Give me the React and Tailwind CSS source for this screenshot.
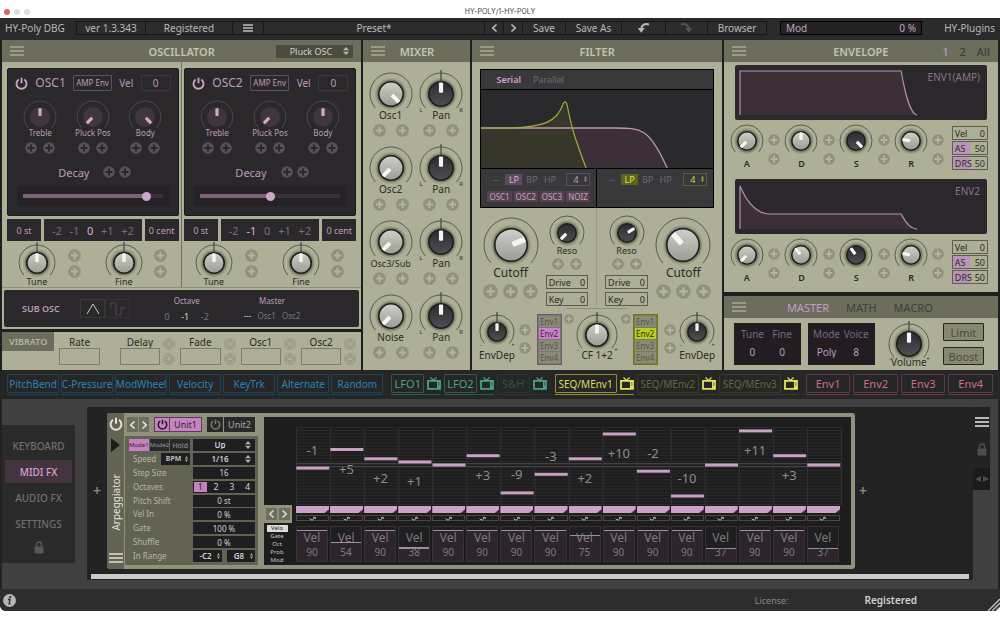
import React from "react";

const KNOB_THEMES = {
  light: { fill: "url(#knob-light)", pointer: "#f4f4f0", ring: "#5a5b4d", edge: "#1d1d1b" },
  dark: { fill: "url(#knob-dark)", pointer: "#f4f4f4", ring: "#5a5b4d", edge: "#1d1d1b" },
  pink: { fill: "#3f373d", pointer: "#d0aacb", ring: "#4b474a", edge: "#3f373d" },
};

function Knob({ label, ring, radius, angle = 0, theme = "light", tick, ends, name, labelClass = "h-2 text-[10px]" }) {
  const t = KNOB_THEMES[theme];
  const c = ring + 1;
  const drop = Math.round(ring * 0.75);
  const k = ring * 0.74;
  const pw = Math.max(3, radius * 0.32);
  return (
    <label className="relative flex flex-col items-center">
      <svg width={2 * c} height={c + drop} viewBox={`${-c} ${-c} ${2 * c} ${c + drop}`} className="block overflow-visible">
        <path
          d={`M${-k} ${ring * 0.67} A${ring} ${ring} 0 1 1 ${k} ${ring * 0.67}`}
          fill="none"
          stroke={t.ring}
          strokeWidth="1"
        />
        {theme !== "pink" && (
          <>
            <circle r={radius + 3} fill="#000" opacity="0.08" />
            <circle r={radius + 1.5} fill="#000" opacity="0.22" />
          </>
        )}
        {tick && <line x1="0" x2="0" y1={-ring - 3} y2={-radius} stroke="#33342b" />}
        <circle r={radius - 0.8} fill={t.fill} stroke={t.edge} strokeWidth="1.6" />
        <rect
          x={-pw / 2}
          y={-radius * 0.88}
          width={pw}
          height={radius * 0.78}
          rx="1"
          fill={t.pointer}
          transform={`rotate(${angle})`}
        />
        {ends && (
          <g fill="#33342b" fontSize="6" textAnchor="middle">
            <text x={-ring + 1} y={drop + 2}>{ends[0]}</text>
            <text x={ring - 1} y={drop + 2}>{ends[1]}</text>
          </g>
        )}
      </svg>
      <span className={"flex items-center whitespace-nowrap " + labelClass}>{label}</span>
      <input
        type="range"
        min="-135"
        max="135"
        defaultValue={angle}
        aria-label={name || label}
        className="absolute inset-0 h-full w-full cursor-pointer opacity-0"
      />
    </label>
  );
}

function Plus({ size = 13, tone = "light" }) {
  const dark = tone === "dark";
  return (
    <button type="button" aria-label="Add modulation" className="block shrink-0">
      <svg width={size} height={size} viewBox="0 0 14 14" className="block">
        {tone === "outline" ? (
          <>
            <circle cx="7" cy="7" r="6.2" fill="none" stroke="#8b8d75" strokeWidth="1" />
            <path d="M5.6 3h2.8v2.6H11v2.8H8.4V11H5.6V8.4H3V5.6h2.6z" fill="none" stroke="#8b8d75" strokeWidth="1" />
          </>
        ) : (
          <>
            <circle cx="7" cy="7" r="6.8" fill={dark ? "#5b4e57" : "#8f917a"} />
            <path d="M7 3v8M3 7h8" stroke={dark ? "#29272a" : "#b2b49b"} strokeWidth="2.2" />
          </>
        )}
      </svg>
    </button>
  );
}

function Burger({ className = "text-[#a9ab93]" }) {
  return (
    <button type="button" aria-label="Menu" className={className}>
      <svg width="14" height="10" viewBox="0 0 14 10" className="block">
        <path d="M0 1h14M0 5h14M0 9h14" stroke="currentColor" strokeWidth="1.6" />
      </svg>
    </button>
  );
}

function Power({ size = 14, strokeWidth = 2 }) {
  return (
    <svg width={size} height={size} viewBox="0 0 14 14" className="block">
      <path d="M4 2.8A5.4 5.4 0 1 0 10 2.8M7 .8v6" fill="none" stroke="currentColor" strokeWidth={strokeWidth} />
    </svg>
  );
}

function Lock() {
  return (
    <svg width="10" height="13" viewBox="0 0 10 13" className="block">
      <rect x="0.5" y="5.5" width="9" height="7" rx="1" fill="currentColor" />
      <path d="M2.5 6V3.5a2.5 2.5 0 0 1 5 0V6" fill="none" stroke="currentColor" strokeWidth="1.5" />
    </svg>
  );
}

function Chevron({ left }) {
  return (
    <svg width="7" height="10" viewBox="0 0 7 10" className="block">
      <path d={left ? "M5.5 1.5 1.8 5l3.7 3.5" : "M1.5 1.5 5.2 5 1.5 8.5"} fill="none" stroke="currentColor" strokeWidth="1.7" />
    </svg>
  );
}

function Picker({ value, options, name, className, small }) {
  return (
    <div className={"relative flex items-center " + className}>
      <select
        aria-label={name}
        defaultValue={value}
        className={"h-full w-full appearance-none bg-transparent text-center [text-align-last:center] outline-none " + (small ? "pr-1" : "pr-2")}
      >
        {(options || [value]).map((o) => (
          <option key={o}>{o}</option>
        ))}
      </select>
      <svg
        width={small ? 3 : 6}
        height={small ? 6 : 8}
        viewBox="0 0 6 8"
        preserveAspectRatio="none"
        className={"pointer-events-none absolute " + (small ? "right-[2px]" : "right-1")}
      >
        <path d="M0 3.2 3 0l3 3.2zM0 4.8 3 8l3-3.2z" fill="currentColor" opacity="0.8" />
      </svg>
    </div>
  );
}

function Field({ value, name, className = "" }) {
  const align = className.includes("text-right") ? "" : "text-center ";
  return (
    <input
      type="text"
      aria-label={name}
      defaultValue={value}
      className={"block w-full min-w-0 outline-none " + align + className}
    />
  );
}

function Header({ title, children }) {
  return (
    <header className="grid h-[22px] grid-cols-[1fr_auto_1fr] items-center bg-[#6c6d5d] px-2 text-[#c3c4b2]">
      <Burger />
      <h2 className="text-[11px] font-semibold">{title}</h2>
      <div className="flex justify-end">{children}</div>
    </header>
  );
}

const barButton = "flex h-[14px] items-center justify-center border-l border-y border-[#181818] bg-[#2c2c2c] whitespace-nowrap";

function Toolbar() {
  return (
    <div className="grid h-[22px] grid-cols-[76fr_69fr_87fr_31fr_221fr_19fr_19fr_43fr_56fr_44fr_42fr_60fr_13fr_142fr_18fr_60fr] items-center bg-[#2a2a2a] pb-[2px] text-[10px] text-[#b9b9b9]">
      <span className="pl-[5px] text-[10px] whitespace-nowrap">HY-Poly DBG</span>
      <span className={barButton}>ver 1.3.343</span>
      <button type="button" className={barButton}>Registered</button>
      <button type="button" aria-label="Main menu" className={barButton}>
        <svg width="10" height="8" viewBox="0 0 10 8"><path d="M0 1h10M0 4h10M0 7h10" stroke="currentColor" strokeWidth="1.3" /></svg>
      </button>
      <button type="button" className={barButton}>Preset*</button>
      <button type="button" aria-label="Previous preset" className={barButton}><Chevron left /></button>
      <button type="button" aria-label="Next preset" className={barButton}><Chevron /></button>
      <button type="button" className={barButton}>Save</button>
      <button type="button" className={barButton}>Save As</button>
      <button type="button" aria-label="Undo" className={barButton}>
        <svg width="13" height="10" viewBox="0 0 13 10">
          <path d="M12 1.4C7.5.4 4.600 2 4.300 5.500" fill="none" stroke="currentColor" strokeWidth="2" />
          <path d="M.8 5h7L4.200 9.800z" fill="currentColor" />
        </svg>
      </button>
      <button type="button" aria-label="Redo" className={barButton + " text-[#555]"}>
        <svg width="13" height="10" viewBox="0 0 13 10">
          <path d="M1 1.400C5.500.4 8.400 2 8.700 5.500" fill="none" stroke="currentColor" strokeWidth="2" />
          <path d="M5.200 5h7L8.800 9.800z" fill="currentColor" />
        </svg>
      </button>
      <button type="button" className={barButton + " border-r"}>Browser</button>
      <span />
      <label className="flex h-[14px] items-center justify-between border border-black bg-[#242124] px-[5px] text-[#c0a5bc]">
        Mod
        <Field value="0 %" name="Mod amount" className="text-right" />
      </label>
      <span />
      <span className="pr-[5px] text-right text-[10px] whitespace-nowrap">HY-Plugins</span>
    </div>
  );
}

function OscColumn({ name, bodyAngle, decay, octave }) {
  const knobs = [["Treble", 0], ["Pluck Pos", -135], ["Body", bodyAngle]];
  return (
    <div className="px-[2px] pt-[6px] pb-[2px]">
      <div className="rounded-[2px] border border-[#1b1b1b] bg-[#2a282a] pt-[6px] pb-[9px] text-[#bd9cba]">
        <div className="flex h-4 items-center justify-between px-[7px]">
          <button type="button" aria-label={name + " power"} className="text-[#c9a3c6]"><Power size={13} /></button>
          <h3 className="text-[12px]">{name}</h3>
          <button type="button" className="h-4 rounded-[1px] border border-[#5c5059] px-[2px] text-[8px] whitespace-nowrap">AMP Env</button>
          <span className="text-[10px]">Vel</span>
          <Field value="0" name={name + " velocity"} className="h-4 max-w-[30px] border border-[#3a363a] text-[10px]" />
        </div>
        <div className="mt-[9px] grid grid-cols-3 px-[6px]">
          {knobs.map(([label, angle]) => (
            <div key={label} className="flex flex-col items-center">
              <Knob label={label} name={name + " " + label} ring={16} radius={10} angle={angle} theme="pink" labelClass="h-[8px] text-[8px]" />
              <div className="mt-[5px] flex gap-[6px]">
                <Plus size={12} tone="dark" />
                <Plus size={12} tone="dark" />
              </div>
            </div>
          ))}
        </div>
        <div className="mt-3 flex h-3 items-center justify-center pl-1 text-[11px]">
          <span className="mr-[14px]">Decay</span>
          <Plus size={12} tone="dark" />
          <span className="w-1" />
          <Plus size={12} tone="dark" />
        </div>
        <div className="mx-[9px] mt-2 flex h-5 items-center bg-[#242224] px-[6px]">
          <input
            type="range"
            aria-label={name + " decay"}
            defaultValue={decay}
            style={{ background: `linear-gradient(to right, #7d6179 ${decay}%, #3a2f37 ${decay}%)` }}
            className="h-1 w-full appearance-none [&::-webkit-slider-thumb]:h-[9px] [&::-webkit-slider-thumb]:w-[9px] [&::-webkit-slider-thumb]:appearance-none [&::-webkit-slider-thumb]:rounded-full [&::-webkit-slider-thumb]:bg-[#cda5c9]"
          />
        </div>
      </div>
      <div className="mt-[3px] grid grid-cols-[34fr_98fr_34fr] gap-[3px] text-[9px] text-[#bd9cba]">
        <Field value="0 st" name={name + " semitones"} className="h-[22px] bg-[#2a282a]" />
        <div className="flex h-[22px] items-center justify-between bg-[#2a282a] px-2 text-[11px] text-[#77707a]">
          {["-2", "-1", "0", "+1", "+2"].map((o) => (
            <button type="button" key={o} className={o === octave ? "text-[#e0aedb]" : ""}>{o}</button>
          ))}
        </div>
        <Field value="0 cent" name={name + " cents"} className="h-[22px] bg-[#2a282a]" />
      </div>
      <div className="mt-[3px] grid grid-cols-[60fr_28fr_58fr_26fr]">
        {["Tune", "Fine"].map((label) => (
          <React.Fragment key={label}>
            <Knob label={label} name={name + " " + label} ring={18} radius={11} tick labelClass="h-2 text-[9px]" />
            <div className="flex flex-col items-start justify-center gap-[3px] pb-[2px] pl-px">
              <Plus />
              <Plus />
            </div>
          </React.Fragment>
        ))}
      </div>
    </div>
  );
}

function SubOsc() {
  return (
    <div className="mx-[2px] mt-[2px] grid h-[37px] grid-cols-[76fr_50fr_26fr_60fr_20fr_70fr_52fr] items-center rounded-[2px] bg-[#2a282a] text-[#bd9cba]">
      <h3 className="pl-[18px] text-[9px] font-semibold whitespace-nowrap">SUB OSC</h3>
      <div className="grid grid-cols-2">
        <button type="button" aria-label="Triangle" className="flex h-[19px] items-center justify-center border border-[#3a383a] text-[#c9c9c9]">
          <svg width="14" height="12" viewBox="0 0 14 12"><path d="M1 11 7 1l6 10" fill="none" stroke="currentColor" /></svg>
        </button>
        <button type="button" aria-label="Square" className="flex h-[19px] items-center justify-center border border-[#343234] text-[#4c494c]">
          <svg width="16" height="14" viewBox="0 0 16 14"><path d="M1 6V1h5v12h5V6h4" fill="none" stroke="currentColor" /></svg>
        </button>
      </div>
      <span />
      <div className="text-center text-[8px]">
        <div className="h-[15px]">Octave</div>
        <div className="flex justify-between px-2 text-[9px] text-[#77757a]">
          <button type="button">0</button>
          <button type="button" className="text-[#d8d8d8]">-1</button>
          <button type="button">-2</button>
        </div>
      </div>
      <span />
      <div className="text-center text-[8px]">
        <div className="h-[15px]">Master</div>
        <div className="flex justify-center gap-[6px] text-[#77757a]">
          <button type="button" className="text-[#d8d8d8]">---</button>
          <button type="button">Osc1</button>
          <button type="button">Osc2</button>
        </div>
      </div>
    </div>
  );
}

function Vibrato() {
  return (
    <section className="mt-[3px] flex h-[38px] bg-[#adaf96] text-[#2b2c24]">
      <h2 className="flex h-[19px] flex-[53] items-center justify-center bg-[#6c6d5d] text-[9px] font-semibold text-[#b3b5a0]">VIBRATO</h2>
      <div className="grid flex-[306] grid-cols-5 pt-[3px] pl-[5px]">
        {["Rate", "Delay", "Fade", "Osc1", "Osc2"].map((n, i) => (
          <div key={n} className="flex gap-[3px]">
            <label className="flex flex-1 flex-col items-center text-[10px]">
              <span className="flex h-[13px] items-center">{n}</span>
              <input type="text" aria-label={"Vibrato " + n} className="h-[17px] w-full min-w-0 border border-[#7c7e69]" />
            </label>
            <div className="flex w-[17px] flex-col gap-[3px] pt-[3px]">
              {i > 0 && <><Plus size={12} tone="outline" /><Plus size={12} tone="outline" /></>}
            </div>
          </div>
        ))}
      </div>
    </section>
  );
}

function Oscillator() {
  return (
    <div>
      <section className="bg-[#adaf96] pb-[2px] text-[#2b2c24]">
        <Header title="OSCILLATOR">
          <Picker value="Pluck OSC" name="Oscillator type" className="h-[13px] w-[77px] bg-[#4b4b40] text-[9px] text-[#d2d3c8]" />
        </Header>
        <div className="grid grid-cols-2 border-b border-[#8e9079] px-[3px]">
          <div className="border-r border-[#6f705f]">
            <OscColumn name="OSC1" bodyAngle={135} decay={91} octave="0" />
          </div>
          <OscColumn name="OSC2" bodyAngle={0} decay={50} octave="-1" />
        </div>
        <SubOsc />
      </section>
      <Vibrato />
    </div>
  );
}

function Mixer() {
  return (
    <section className="bg-[#adaf96] text-[#2b2c24]">
      <Header title="MIXER" />
      <div className="flex flex-col gap-[9px] pt-[10px] pr-1 pl-[2px]">
        {[["Osc1", 135], ["Osc2", -135], ["Osc3/Sub", -135], ["Noise", -135]].map(([n, a]) => (
          <div key={n} className="grid grid-cols-2">
            <Knob label={n} ring={21} radius={13} angle={a} labelClass={n.length > 6 ? "h-[10px] text-[9px]" : "h-[10px] text-[10px]"} />
            <Knob label="Pan" name={n + " pan"} ring={21} radius={13} theme="dark" tick ends={["L", "R"]} labelClass="h-[10px] text-[10px]" />
            <div className="mt-1 flex justify-center gap-[10px]"><Plus /><Plus /></div>
            <div className="mt-1 flex justify-center gap-[10px]"><Plus /><Plus /></div>
          </div>
        ))}
      </div>
    </section>
  );
}

function FilterSlot({ accent, chips }) {
  return (
    <div className={"px-[6px] py-[3px] " + (chips ? "border-r border-black" : "")}>
      <div className="flex h-[14px] items-center gap-[1px] text-[9px] text-[#6d6a70]">
        <button type="button" className="w-[17px]">--</button>
        <button type="button" className={"h-[11px] w-[17px] leading-[11px] " + (accent === "pink" ? "bg-[#5d4a5b] text-[#d6b3d2]" : "bg-[#5c6220] text-[#dbe54a]")}>LP</button>
        <button type="button" className="w-[17px]">BP</button>
        <button type="button" className="w-[17px]">HP</button>
        <span className="flex-1" />
        <Picker
          small
          value="4"
          options={["2", "4"]}
          name="Filter poles"
          className={"h-[13px] w-6 border text-[9px] " + (accent === "pink" ? "border-[#565158] text-[#b79cb6]" : "border-[#5a5e33] text-[#c9d447]")}
        />
      </div>
      {chips && (
        <div className="mt-[5px] grid grid-cols-4 gap-[2px] text-[8px] text-[#c79fc6]">
          {["OSC1", "OSC2", "OSC3", "NOIZ"].map((c) => (
            <button type="button" key={c} className="h-[11px] bg-[#54434f] leading-[11px]">{c}</button>
          ))}
        </div>
      )}
    </div>
  );
}

function Boxed({ label, value, fill }) {
  return (
    <label className={"flex h-[14px] items-center border border-[#5c5d4e] px-[2px] text-[9px] " + (fill || "")}>
      {label}
      <Field value={value} name={label} className="text-right" />
    </label>
  );
}

function CutoffGroup({ angle }) {
  return (
    <div className="flex flex-[61] flex-col items-center pt-[2px]">
      <Knob label="Cutoff" ring={27} radius={17} angle={angle} labelClass="h-[15px] text-[12px]" />
      <div className="mt-1 flex gap-[5px]"><Plus size={15} /><Plus size={15} /><Plus size={15} /></div>
    </div>
  );
}

function ResoGroup({ angle }) {
  return (
    <div className="flex flex-[43] flex-col">
      <Knob label="Reso" ring={17} radius={10} angle={angle} theme="dark" labelClass="h-2 text-[9px]" />
      <div className="mt-1 flex justify-center gap-[6px]"><Plus size={12} /><Plus size={12} /></div>
      <div className="mt-[5px] flex flex-col gap-[3px]">
        <Boxed label="Drive" value="0" />
        <Boxed label="Key" value="0" />
      </div>
    </div>
  );
}

function EnvList({ accent }) {
  const on = accent === "pink" ? "bg-[#c883c8] text-[#3f1f40]" : "bg-[#b9cb2b] text-[#2b300a]";
  const rim = accent === "pink" ? "border-[#6b5b69] bg-[#7d7582]" : "border-[#6d7420] bg-[#7b8241]";
  return (
    <div className={"flex flex-col gap-px border p-px text-[8px] " + rim}>
      {["Env1", "Env2", "Env3", "Env4"].map((e) => (
        <button type="button" key={e} className={"h-[11px] leading-[11px] " + (e === "Env2" ? on : "bg-[#898b76] text-[#55564a]")}>{e}</button>
      ))}
    </div>
  );
}

function PlusPair() {
  return (
    <div className="flex flex-col items-center gap-[6px] pt-[10px]">
      <Plus size={12} />
      <Plus size={12} />
    </div>
  );
}

function FilterPanel() {
  return (
    <section className="bg-[#adaf96] text-[#2b2c24]">
      <Header title="FILTER" />
      <div className="mx-2 mt-[7px] border border-black bg-[#39383b]">
        <div className="flex h-[20px] items-center gap-3 border-b border-black pl-[15px] text-[9px]">
          <button type="button" className="font-semibold text-[#cfa2cc]">Serial</button>
          <button type="button" className="text-[#6d6a70]">Parallel</button>
        </div>
        <svg viewBox="0 0 231 78" preserveAspectRatio="none" className="block h-[79px] w-full border-b border-black bg-[#2a292b]">
          <path d="M0 38H135C165 38 172 42 186 78H0z" fill="#3b3038" />
          <path d="M0 38C55 37 78 34 84 12 88 20 90 45 106 78H0z" fill="#37362a" />
          <path d="M0 38H134C160 38 168 38 186 78" fill="none" stroke="#bf92b8" strokeWidth="1.300" />
          <path d="M0 38H30C62 37 76 32 82 14 83 11 85 11 86 15 91 40 94 49 105 78" fill="none" stroke="#a3ac3a" strokeWidth="1.200" />
        </svg>
        <div className="grid h-[38px] grid-cols-2">
          <FilterSlot accent="pink" chips />
          <FilterSlot accent="lime" />
        </div>
      </div>
      <div className="grid grid-cols-2">
        <div className="flex gap-[5px] border-r border-[#9a9c85] px-2 pt-[7px]">
          <CutoffGroup angle={68} />
          <ResoGroup angle={-135} />
        </div>
        <div className="flex gap-[5px] px-2 pt-[7px]">
          <ResoGroup angle={58} />
          <CutoffGroup angle={-42} />
        </div>
      </div>
      <div className="mx-auto mt-[2px] h-px w-[60px] bg-[#8e9079]" />
      <div className="grid grid-cols-[41fr_14fr_5fr_25fr_14fr_43fr_14fr_25fr_5fr_14fr_41fr] items-start px-1 pt-[5px]">
        <Knob label="EnvDep" ring={17} radius={10} theme="dark" tick ends={["-", "+"]} labelClass="mt-[5px] h-[10px] text-[10px]" />
        <PlusPair />
        <span />
        <EnvList accent="pink" />
        <div className="flex justify-center"><Plus size={10} /></div>
        <Knob label="CF 1+2" ring={20} radius={12} tick ends={["-", "+"]} labelClass="h-[10px] text-[10px]" />
        <div className="flex justify-center"><Plus size={10} /></div>
        <EnvList accent="lime" />
        <span />
        <PlusPair />
        <Knob label="EnvDep" name="EnvDep 2" ring={17} radius={10} theme="dark" tick ends={["-", "+"]} labelClass="mt-[5px] h-[10px] text-[10px]" />
      </div>
    </section>
  );
}

function EnvelopeBlock({ title, line, area, angles }) {
  return (
    <div>
      <div className="ml-[11px] mr-[11px] grid rounded-[2px] bg-[#2a282a]">
        <svg viewBox="0 0 252 55" preserveAspectRatio="none" className="col-start-1 row-start-1 block h-[55px] w-full">
          <path d={area} fill="#3a3036" />
          <path d={line} fill="none" stroke="#b48fb0" strokeWidth="1.200" />
        </svg>
        <span className="col-start-1 row-start-1 justify-self-end pt-[7px] pr-[7px] text-[10px] text-[#8a7488]">{title}</span>
      </div>
      <div className="flex gap-[3px] pt-1 pr-[10px] pl-[6px]">
        <div className="grid flex-[218] grid-cols-4">
          {["A", "D", "S", "R"].map((n, i) => (
            <div key={n} className="grid grid-cols-[33fr_22fr]">
              <Knob label={n} name={title + " " + n} ring={16} radius={10} angle={angles[i]} theme={n === "S" ? "dark" : "light"} labelClass="mt-[5px] h-[10px] text-[9px] font-semibold" />
              <div className="flex flex-col items-center gap-[7px] pt-[10px]"><Plus size={12} /><Plus size={12} /></div>
            </div>
          ))}
        </div>
        <div className="flex flex-[36] flex-col gap-px pt-[2px]">
          <Boxed label="Vel" value="0" />
          <Boxed label="AS" value="50" fill="bg-linear-to-r from-[#bb93b8] from-50% to-transparent to-50%" />
          <Boxed label="DRS" value="50" fill="bg-linear-to-r from-[#bb93b8] from-50% to-transparent to-50%" />
        </div>
      </div>
    </div>
  );
}

function Envelope() {
  return (
    <section className="bg-[#adaf96] pb-2 text-[#2b2c24]">
      <Header title="ENVELOPE">
        <div className="flex gap-[11px] text-[11px] font-medium text-[#3d3e34]">
          <button type="button" className="font-semibold text-[#b68fb2]">1</button>
          <button type="button">2</button>
          <button type="button">All</button>
        </div>
      </Header>
      <div className="flex flex-col gap-[9px] pt-[3px]">
        <EnvelopeBlock
          title="ENV1(AMP)"
          line="M5 50V6H166C170 30 176 50 182 50"
          area="M5 50V6H166C170 30 176 50 182 50z"
          angles={[-135, 0, 135, -80]}
        />
        <EnvelopeBlock
          title="ENV2"
          line="M5 50V7Q16 33 33 35H166C171 45 176 50 182 50"
          area="M5 50V7Q16 33 33 35H166C171 45 176 50 182 50z"
          angles={[-135, -42, -38, -80]}
        />
      </div>
    </section>
  );
}

function Duo({ items }) {
  return (
    <div className="grid h-[42px] grid-cols-2 bg-[#231d22] px-1 text-center text-[10px]">
      {items.map(([n, v]) => (
        <label key={n} className="flex flex-col items-center pt-[5px] text-[#77697a]">
          <span className="flex h-3 items-center">{n}</span>
          <Field value={v} name={n} className="mt-[6px] h-3 text-[#bd9cba]" />
        </label>
      ))}
    </div>
  );
}

function Master() {
  return (
    <section className="mt-1 bg-[#adaf96] text-[#2b2c24]">
      <header className="flex h-[22px] items-center bg-[#6c6d5d] px-2 text-[11px] text-[#3f4036]">
        <Burger />
        <div className="flex flex-1 justify-center gap-[17px] pr-4">
          <button type="button" className="text-[#c79bc8]">MASTER</button>
          <button type="button">MATH</button>
          <button type="button">MACRO</button>
        </div>
      </header>
      <div className="grid grid-cols-[67fr_7fr_67fr_68fr_41fr] py-[5px] pr-[14px] pl-[10px]">
        <Duo items={[["Tune", "0"], ["Fine", "0"]]} />
        <span />
        <Duo items={[["Mode", "Poly"], ["Voice", "8"]]} />
        <Knob label="Volume" ring={20} radius={13} theme="dark" tick ends={["-", "+"]} labelClass="h-[6px] text-[10px]" />
        <div className="flex flex-col justify-between text-[11px] text-[#4a4b40]">
          <button type="button" className="h-[18px] rounded-[1px] border border-[#26261f] bg-[#86886f]">Limit</button>
          <button type="button" className="h-[18px] rounded-[1px] border border-[#26261f] bg-[#86886f]">Boost</button>
        </div>
      </div>
    </section>
  );
}

function Tv() {
  return (
    <svg width="14" height="13" viewBox="0 0 14 13" className="block shrink-0">
      <path d="M3.500.5 6.500 3.500 9.500.5" fill="none" stroke="currentColor" strokeWidth="1.200" />
      <path d="M1 3.800h12v8H1z" fill="none" stroke="currentColor" strokeWidth="1.800" />
      <path d="M10 4h3v8h-3z" fill="currentColor" />
      <path d="M11 6h1.500M11 8h1.500" stroke="#262626" strokeWidth=".8" />
    </svg>
  );
}

const SOURCE_TONES = {
  blue: ["border-[#1d4356]", "text-[#2b83b4]"],
  green: ["border-[#2a5a4b]", "text-[#47a386]"],
  greenOff: ["border-[#26352f]", "text-[#2c5347]"],
  yellow: ["border-[#8f9138]", "text-[#dcde63]"],
  yellowOff: ["border-[#3b3c26]", "text-[#66682f]"],
  pink: ["border-[#5e3849]", "text-[#c66f96]"],
};

function Source({ label, tone, tv, size = "text-[10px]" }) {
  const [border, text] = SOURCE_TONES[tone];
  return (
    <div className={"flex-1 border-b pb-[1px] " + border}>
      <div className="flex items-center gap-[3px]">
        <button type="button" className={`h-[19px] min-w-0 flex-1 rounded-[1px] border whitespace-nowrap ${size} ${border} ${text}`}>
          <span className="-mx-1">{label}</span>
        </button>
        {tv && <button type="button" aria-label={"Show " + label} className={tv}><Tv /></button>}
      </div>
    </div>
  );
}

function Sources() {
  const g = "text-[#47a386]";
  const y = "text-[#e4e45a]";
  return (
    <div className="grid grid-cols-[376fr_155fr_243fr_187fr] gap-2 bg-[#262626] px-[7px] pt-[4px] pb-1">
      <div className="grid grid-cols-7 gap-[2px]">
        {["PitchBend", "C-Pressure", "ModWheel", "Velocity", "KeyTrk", "Alternate", "Random"].map((s) => (
          <Source key={s} label={s} tone="blue" />
        ))}
      </div>
      <div className="grid grid-cols-3 gap-[3px]">
        <Source label="LFO1" tone="green" tv={g} size="text-[11px]" />
        <Source label="LFO2" tone="green" tv={g} size="text-[11px]" />
        <Source label="S&H" tone="greenOff" tv={g} size="text-[11px]" />
      </div>
      <div className="grid grid-cols-3 gap-[3px]">
        <Source label="SEQ/MEnv1" tone="yellow" tv={y} />
        <Source label="SEQ/MEnv2" tone="yellowOff" tv={y} />
        <Source label="SEQ/MEnv3" tone="yellowOff" tv={y} />
      </div>
      <div className="grid grid-cols-4 gap-[3px]">
        {["Env1", "Env2", "Env3", "Env4"].map((s) => (
          <Source key={s} label={s} tone="pink" size="text-[11px]" />
        ))}
      </div>
    </div>
  );
}

function SideNav() {
  return (
    <nav className="mt-[26px] mb-[26px] flex w-[73px] shrink-0 flex-col items-center rounded-r-[2px] bg-[#2a2a2a] px-[3px] pt-[9px] text-[10px] font-medium text-[#6f6f6f]">
      {["KEYBOARD", "MIDI FX", "AUDIO FX", "SETTINGS"].map((n) => (
        <button
          type="button"
          key={n}
          className={"mb-[3px] h-[23px] w-full rounded-[1px] " + (n === "MIDI FX" ? "bg-[#43343f] text-[#d3a5cf]" : "")}
        >
          {n}
        </button>
      ))}
      <button type="button" aria-label="Lock" className="mt-[3px] text-[#585858]"><Lock /></button>
    </nav>
  );
}

const cell = "h-3 bg-[#1f1e20] text-[#d0d0d0]";

function ArpControls() {
  return (
    <div className="flex flex-1 flex-col justify-between bg-[#626353] py-[3px] pr-[3px] pl-1 text-[8px] text-[#b5b6a5]">
      <div className="flex gap-[3px]">
        <div className="flex flex-1 gap-px text-[6px]">
          <button type="button" className="h-3 flex-[20] bg-[#c583c2] text-[#3a1c3a]"><span className="-mx-1">Mode1</span></button>
          <button type="button" className="h-3 flex-[20] bg-[#2a292a] text-[#999]"><span className="-mx-1">Mode2</span></button>
          <button type="button" className="h-3 flex-[20] bg-[#2a292a] text-[7px] text-[#999]">Hold</button>
        </div>
        <Picker value="Up" name="Pattern" className={cell + " w-[62px] font-semibold"} />
      </div>
      <div className="flex items-center gap-[3px]">
        <span className="flex-1 pl-1">Speed</span>
        <Picker small value="BPM" name="Speed mode" className={cell + " w-[29px] text-[7px] font-semibold"} />
        <Picker value="1/16" name="Speed" className={cell + " w-[62px] font-semibold"} />
      </div>
      <label className="flex items-center">
        <span className="flex-1 pl-1">Step Size</span>
        <span className={cell + " w-[62px]"}><Field value="16" name="Step Size" className="h-full" /></span>
      </label>
      <div className="flex items-center">
        <span className="flex-1 pl-1">Octaves</span>
        <div className={cell + " grid w-[62px] grid-cols-4 gap-px text-[9px] text-[#8d8d8d]"}>
          {["1", "2", "3", "4"].map((o) => (
            <button type="button" key={o} className={"m-px leading-[10px] " + (o === "1" ? "bg-[#c583c2] text-[#3a1c3a]" : "")}>{o}</button>
          ))}
        </div>
      </div>
      {[["Pitch Shift", "0 st"], ["Vel In", "0 %"], ["Gate", "100 %"], ["Shuffle", "0 %"]].map(([n, v]) => (
        <label key={n} className="flex items-center">
          <span className="flex-1 pl-1">{n}</span>
          <span className={cell + " w-[62px]"}><Field value={v} name={n} className="h-full" /></span>
        </label>
      ))}
      <div className="flex items-center gap-[5px]">
        <span className="flex-1 pl-1">In Range</span>
        <Picker small value="-C2" name="Range low" className={cell + " w-[29px] font-semibold"} />
        <Picker small value="G8" name="Range high" className={cell + " w-[28px] font-semibold"} />
      </div>
    </div>
  );
}

const NOTES = [-1, 5, 2, 1, 0, 3, -9, -3, 2, 10, -2, -10, 0, 11, 3, 0];
const VELS = [90, 54, 90, 38, 90, 90, 90, 90, 75, 90, 90, 90, 37, 90, 90, 37];

function NoteGrid() {
  const w = 100 / 16;
  const mid = 38;
  return (
    <svg className="block h-[78px] w-full overflow-visible" fontSize="13" textAnchor="middle">
      {Array.from({ length: 26 }, (_, i) => (
        <rect key={i} x="0" width="100%" y={i * 3.08} height="1" fill="#2b2b2b" />
      ))}
      <rect x="0" width="100%" y={mid - 2} height="1" fill="#444" />
      <rect x="0" width="100%" y={mid + 1} height="1" fill="#444" />
      {Array.from({ length: 17 }, (_, i) => (
        <rect key={i} x={i * w + "%"} width="1" y="0" height="78" fill="#303030" />
      ))}
      {NOTES.map((n, i) => (
        <g key={i}>
          <rect x={i * w + 0.05 + "%"} width={w - 0.2 + "%"} y={mid - 1.5 - n * 3.1} height="3" fill="#c9a0c6" />
          {n !== 0 && (
            <text x={(i + 0.48) * w + "%"} y={mid + 4.5 - n * 3.1 + (n > 0 ? 19.5 : -18)} fill="#8c8c8c">
              {n > 0 ? "+" + n : n}
            </text>
          )}
        </g>
      ))}
    </svg>
  );
}

function Sequencer() {
  return (
    <div className="flex min-w-0 flex-1 bg-[#1d1d1d]">
      <div className="flex w-7 shrink-0 flex-col">
        <div className="h-[88px]" />
        <div className="flex h-[18px] items-center justify-evenly bg-[#8f917b] text-[#d8d8cc]">
          <button type="button" aria-label="Previous lane" className="flex h-3 w-[11px] items-center justify-center bg-[#6c6d5d]"><Chevron left /></button>
          <button type="button" aria-label="Next lane" className="flex h-3 w-[11px] items-center justify-center bg-[#6c6d5d]"><Chevron /></button>
        </div>
        <div className="flex flex-col items-center pt-[2px] pr-[2px] text-[6px] text-[#c8c8c8]">
          {["Velo", "Gate", "Oct", "Prob", "Mod"].map((n) => (
            <button type="button" key={n} className={"mb-px h-[7px] w-[21px] leading-[7px] " + (n === "Velo" ? "bg-[#dcdcdc] text-[#222]" : "")}>{n}</button>
          ))}
        </div>
      </div>
      <div className="flex-1 pt-[10px] pr-[10px] pl-[4px]">
        <NoteGrid />
        <div className="mt-px grid grid-cols-16">
          {VELS.map((v, i) => (
            <div key={i} className="flex flex-col pr-px">
              <div className="bg-[#3d2440]">
                <div className="h-[7px] bg-[#cba2c8] [clip-path:polygon(0_0,100%_0,100%_45%,86%_100%,0_100%)]" />
              </div>
              <div className="mt-[2px] flex h-[6px] items-center justify-center border border-[#484848] text-[#c0c0c0]">
                <svg width="8" height="5" viewBox="0 0 8 5"><path d="M.5 2.500Q3.500 6 5.500 1.500M4 2l1.800-1 .8 2" fill="none" stroke="currentColor" /></svg>
              </div>
              <button
                type="button"
                aria-label={`Step ${i + 1} velocity ${v}`}
                style={{ background: `linear-gradient(to top, #2d252b ${v - 2}%, #a58ba3 ${v - 2}%, #a58ba3 ${v + 2}%, #1f1e20 ${v + 2}%)` }}
                className="mt-[5px] mr-px flex h-9 flex-col items-center justify-between border border-[#353135] pt-[5px] pb-[4px] text-[#7d797d]"
              >
                <span className="text-[12px]">Vel</span>
                <span className="text-[10px]">{v}</span>
              </button>
            </div>
          ))}
        </div>
      </div>
    </div>
  );
}

function Arpeggiator() {
  return (
    <section className="flex h-[156px] rounded-[3px] bg-[#8f917b]">
      <div className="flex w-[17px] shrink-0 flex-col items-center rounded-l-[3px] bg-[#626353] pt-1 pb-[6px] text-[#e2e2da]">
        <button type="button" aria-label="Arpeggiator power"><Power size={14} /></button>
        <button type="button" aria-label="Expand" className="mt-[7px] text-[#1c1c18]">
          <svg width="9" height="14" viewBox="0 0 9 14" className="block"><path d="M0 0 9 7 0 14z" fill="currentColor" /></svg>
        </button>
        <div className="flex flex-1 items-center">
          <h3 className="rotate-180 text-[10px] [writing-mode:vertical-rl]">Arpeggiator</h3>
        </div>
        <Burger className="px-[2px] text-[#e2e2da]" />
      </div>
      <div className="flex min-w-0 flex-1 flex-row py-1 pr-1">
        <div className="flex w-[140px] shrink-0 flex-col pr-[6px] pl-px">
          <div className="flex h-[15px] items-stretch pl-[2px] text-[9px]">
            <button type="button" aria-label="Previous" className="flex w-[11px] items-center justify-center bg-[#6c6d5d] text-[#e2e2da]"><Chevron left /></button>
            <button type="button" aria-label="Next" className="ml-px flex w-[10px] items-center justify-center bg-[#6c6d5d] text-[#e2e2da]"><Chevron /></button>
            <button type="button" aria-label="Unit1 power" className="ml-[5px] flex w-4 items-center justify-center border border-[#5c3a5b] bg-[#c583c2] text-[#2b142b]"><Power size={11} /></button>
            <button type="button" className="w-8 border border-l-0 border-[#5c3a5b] bg-[#c583c2] text-[#3a1c3a]"><span className="-mx-1">Unit1</span></button>
            <button type="button" aria-label="Unit2 power" className="ml-[5px] flex w-4 items-center justify-center bg-[#2a292a] text-[#777]"><Power size={11} /></button>
            <button type="button" className="ml-px w-[31px] bg-[#2a292a] text-[#a8a8a8]"><span className="-mx-1">Unit2</span></button>
          </div>
          <div className="h-1" />
          <ArpControls />
        </div>
        <Sequencer />
      </div>
    </section>
  );
}

function Workspace() {
  return (
    <div className="mx-[2px] flex bg-[#404040]">
      <SideNav />
      <div className="mt-2 mb-[9px] ml-3 flex-1 rounded-[2px] bg-[#232323]">
        <div className="grid grid-cols-[20fr_748fr_118fr] items-center pt-[6px] text-[14px] font-semibold text-[#8a8a8a]">
          <button type="button" aria-label="Add effect before" className="text-center">+</button>
          <div className="font-normal">
            <Arpeggiator />
          </div>
          <button type="button" aria-label="Add effect after" className="pl-1 text-left">+</button>
        </div>
        <div className="mx-1 mt-[5px] mb-px h-[5px] bg-[#cacaca]" />
      </div>
      <div className="mt-2 mr-2 flex h-[83px] w-[17px] shrink-0 flex-col items-center bg-[#232323] pt-[10px] text-[#4d4d4d]">
        <Burger className="px-[2px] text-[#e8e8e8]" />
        <button type="button" aria-label="Lock chain" className="mt-4"><Lock /></button>
        <button type="button" aria-label="Resize" className="mt-3 flex h-[22px] w-full items-center justify-center bg-[#1b1b1b]">
          <svg width="14" height="6" viewBox="0 0 14 6"><path d="M6 0v6L0 3zM8 0v6l6-3z" fill="currentColor" /></svg>
        </button>
      </div>
    </div>
  );
}

export default function App() {
  return (
    <div className="min-h-screen w-full bg-white font-['Noto_Sans',sans-serif] leading-none">
      <svg className="absolute h-0 w-0" aria-hidden="true">
        <linearGradient id="knob-light" x1="0" y1="0" x2="0" y2="1">
          <stop offset="0" stopColor="#cfcfcb" />
          <stop offset="1" stopColor="#9b9b95" />
        </linearGradient>
        <linearGradient id="knob-dark" x1="0" y1="0" x2="0" y2="1">
          <stop offset="0" stopColor="#2c2b2d" />
          <stop offset="1" stopColor="#504e52" />
        </linearGradient>
      </svg>
      <div className="flex h-[18px] items-center px-[4px] pt-[5px]">
        <div className="flex flex-1 gap-1">
          <span className="h-[6px] w-[6px] rounded-full bg-[#e0605e]" />
          <span className="h-[6px] w-[6px] rounded-full bg-[#dedede]" />
          <span className="h-[6px] w-[6px] rounded-full bg-[#dedede]" />
        </div>
        <h1 className="font-['Inter'] text-[7px] text-[#3a3a3a]">HY-POLY/1-HY-POLY</h1>
        <div className="flex-1" />
      </div>
      <main className="overflow-hidden rounded-b-[6px] bg-[#222]">
        <Toolbar />
        <div className="grid grid-cols-[359fr_107fr_249fr_274fr] gap-[2px] bg-[#1f1f1f] px-[2px]">
          <Oscillator />
          <Mixer />
          <FilterPanel />
          <div>
            <Envelope />
            <Master />
          </div>
        </div>
        <Sources />
        <Workspace />
        <footer className="flex h-[22px] items-center bg-[#2d2d2d] pl-[3px] text-[#8a8a8a]">
          <button type="button" aria-label="Information">
            <svg width="13" height="13" viewBox="0 0 13 13" className="block">
              <circle cx="6.500" cy="6.500" r="6.500" fill="#b5b5b5" />
              <circle cx="7.200" cy="3.200" r="1.100" fill="#2d2d2d" />
              <path d="M5 5.500h2L6.200 9.700h1.300" fill="none" stroke="#2d2d2d" strokeWidth="1.400" />
            </svg>
          </button>
          <span className="ml-auto text-[9px]">License:</span>
          <span className="mr-[69px] ml-[76px] text-[10px] font-semibold text-[#d2d2d2]">Registered</span>
          <svg width="14" height="14" viewBox="0 0 14 14" className="self-end">
            <path d="M2 14 14 2M6 14l8-8M10 14l4-4" stroke="#c8c8c8" strokeWidth="1.300" />
          </svg>
        </footer>
      </main>
    </div>
  );
}
